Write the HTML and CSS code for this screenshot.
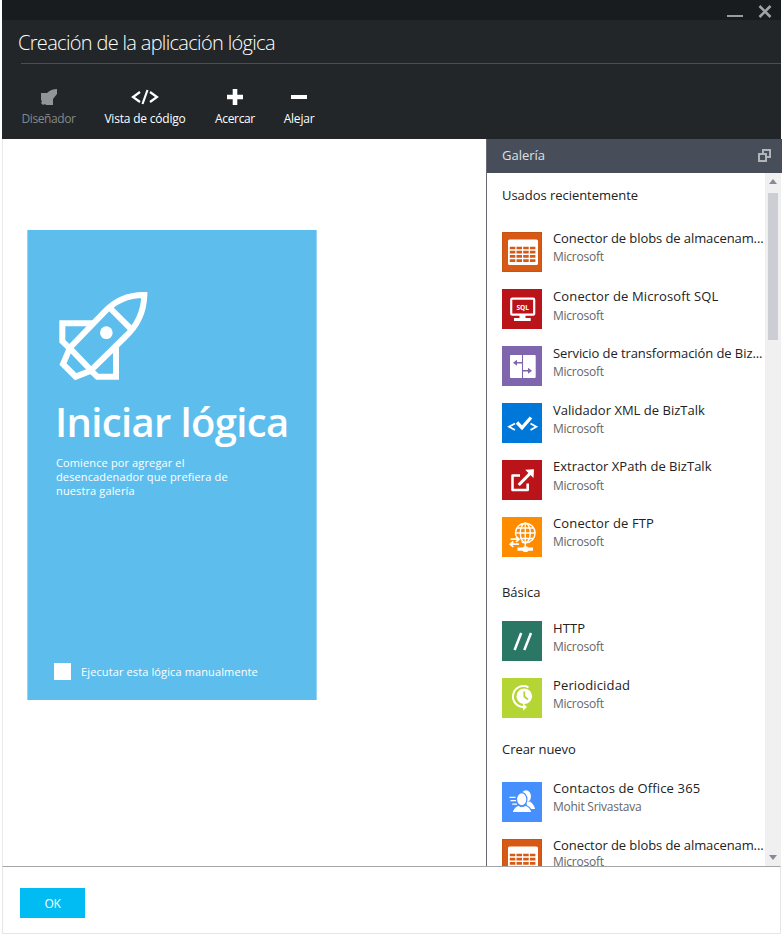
FILE: index.html
```html
<!DOCTYPE html>
<html lang="es">
<head>
<meta charset="utf-8">
<title>Creación de la aplicación lógica</title>
<link rel="stylesheet" href="styles.css">
</head>
<body>
<svg class="defs" aria-hidden="true">
  <symbol id="blob" viewBox="0 0 40 40">
    <rect width="40" height="40" fill="#d65a15"/>
    <rect x=".5" y=".5" width="39" height="39" fill="none" stroke="#c95411"/>
    <rect x="6" y="7.5" width="30" height="25.5" rx="1.5" fill="#fff"/>
    <g stroke="#d65a15" stroke-width="2.7" stroke-dasharray="5.5 1.2">
      <path d="M7.8 16H34.2M7.8 20.2H34.2M7.8 24.4H34.2M7.8 28.6H34.2"/>
    </g>
  </symbol>
</svg>
<div class="window">
  <div class="titlebar">
    <svg width="16" height="14" viewBox="0 0 16 14"><path d="M0 12H16" stroke="#999c9e" stroke-width="2"/></svg>
    <svg width="14" height="14" viewBox="0 0 14 14"><path d="M1.5 2L12.5 13M12.5 2L1.5 13" stroke="#a0a3a5" stroke-width="2.6"/></svg>
  </div>
  <header class="header">
    <h1>Creación de la aplicación lógica</h1>
    <nav class="toolbar">
      <div class="tool tool-off"><svg width="18" height="18" viewBox="0 0 18 18"><path fill="#929496" d="M17 1V6L13 11V17H6L5 16L3 17L1 15L2 13L1 12V5H7Q11 1 17 1Z"/></svg><span>Diseñador</span></div>
      <div class="tool tool-code"><svg width="28" height="18" viewBox="0 0 28 18"><path fill="none" stroke="#fff" stroke-width="2.2" d="M9 4L2 9L9 14M19 4L26 9L19 14M16.5 2L11.5 16"/></svg><span>Vista de código</span></div>
      <div class="tool tool-in"><svg width="18" height="18" viewBox="0 0 18 18"><path stroke="#fff" stroke-width="4.6" d="M9 1V17M1 9H17"/></svg><span>Acercar</span></div>
      <div class="tool tool-out"><svg width="18" height="18" viewBox="0 0 18 18"><path stroke="#fff" stroke-width="4" d="M1 9H17"/></svg><span>Alejar</span></div>
    </nav>
  </header>
  <main class="main">
    <section class="canvas">
      <div class="start">
        <svg class="rocket" viewBox="110 210 276 276" fill="none" stroke="#fff" stroke-width="18">
          <path d="M372 225Q300 224 250 278L148 384L212 451L314 351Q370 300 372 225Z"/>
          <path d="M272 267L330 325M220 310H126V364L148 385L128 432L166 470L212 452L231 470H287V376"/>
          <circle cx="258" cy="338" r="19" fill="#fff" stroke="none"/>
        </svg>
        <h2>Iniciar lógica</h2>
        <p>Comience por agregar el<br>desencadenador que prefiera de<br>nuestra galería</p>
        <div class="manual"><i class="box"></i><span>Ejecutar esta lógica manualmente</span></div>
      </div>
    </section>
    <aside class="gallery">
      <div class="gallery-head"><span>Galería</span>
        <svg width="14" height="14" viewBox="0 0 14 14" fill="none" stroke="#b1b5b9" stroke-width="2"><path d="M5 5V2H12V9H9"/><path d="M1 6H8V13H1Z"/></svg>
      </div>
      <div class="gallery-body">
        <div class="list">
          <h3>Usados recientemente</h3>
          <div class="item up"><svg><use href="#blob"/></svg><div><b class="clip">Conector de blobs de almacenam...</b><small>Microsoft</small></div></div>
          <div class="item low"><svg viewBox="0 0 40 40"><rect width="40" height="40" fill="#ba141a"/><rect x="9.2" y="9.7" width="23" height="16" rx="1" fill="none" stroke="#fff" stroke-width="2.2"/><path fill="#fff" d="M17.5 26H23.5V29H28.7V32H12V29H17.5Z"/><text class="sql" x="20.7" y="20.6" text-anchor="middle">SQL</text></svg><div><b>Conector de Microsoft SQL</b><small>Microsoft</small></div></div>
          <div class="item"><svg viewBox="0 0 40 40"><rect width="40" height="40" fill="#7e65ae"/><rect x="8" y="9" width="25.7" height="23" rx="1" fill="#fff"/><path fill="none" stroke="#7e65ae" stroke-width="1.1" d="M20.5 9V32"/><path fill="none" stroke="#7e65ae" stroke-width="1.5" d="M20.7 16.7H12.5M21 24.7H28.5"/><path fill="#7e65ae" d="M11 16.7L15 13.7V19.7ZM30 24.7L26 21.7V27.7Z"/></svg><div><b class="clip">Servicio de transformación de Biz...</b><small>Microsoft</small></div></div>
          <div class="item"><svg viewBox="0 0 40 40"><rect width="40" height="40" fill="#0078d9"/><path fill="none" stroke="#fff" stroke-width="1.8" d="M13 20.5L7 23.7L13 27M28.5 20.5L34.3 23.7L28.5 27"/><path fill="none" stroke="#fff" stroke-width="3.4" d="M15 19.5L20 24.8L29 14.5"/></svg><div><b class="biz">Validador XML de BizTalk</b><small>Microsoft</small></div></div>
          <div class="item hi"><svg viewBox="0 0 40 40"><rect width="40" height="40" fill="#ba141a"/><path fill="none" stroke="#fff" stroke-width="2.6" stroke-linejoin="round" d="M18 15.5H10.5V30H25.7V23.5"/><path stroke="#fff" stroke-width="3.2" d="M16.7 25L28.5 13"/><path fill="#fff" d="M32 9.3L23.2 9.8L31.5 18Z"/></svg><div><b class="biz">Extractor XPath de BizTalk</b><small>Microsoft</small></div></div>
          <div class="item up"><svg viewBox="0 0 40 40"><rect width="40" height="40" fill="#ff8c00"/><g fill="none" stroke="#fff" stroke-width="1.4"><circle cx="23.3" cy="16" r="9.8"/><ellipse cx="23.3" cy="16" rx="5" ry="9.8"/><path d="M23.3 6V30M13.5 16H33M15 11H31.5M15 21.5H31.5"/></g><path fill="#ff8c00" d="M6 19H17L20 26L16 30H6Z"/><path fill="none" stroke="#fff" stroke-width="1.7" d="M8.5 22.2H16.5M14 19.5L17 22.2L14 25M17 27.2H9M11.3 24.5L8.3 27.2L11.3 30"/><path fill="#fff" d="M15.5 30.5H20.5L22 29.5H25L26.5 30.5H31V33.8H26.5L25 35H22L20.5 33.8H15.5Z"/></svg><div><b>Conector de FTP</b><small>Microsoft</small></div></div>
          <h3>Básica</h3>
          <div class="item"><svg viewBox="0 0 40 40"><rect width="40" height="40" fill="#2b7766"/><path stroke="#fff" stroke-width="2.5" d="M12.6 29L19.2 12M22.3 29L29 12"/></svg><div><b>HTTP</b><small>Microsoft</small></div></div>
          <div class="item"><svg viewBox="0 0 40 40"><rect width="40" height="40" fill="#b4d534"/><circle cx="22.3" cy="18.3" r="7.8" fill="#fff"/><path fill="none" stroke="#fff" stroke-width="2" d="M26.5 9.3A10.5 10.5 0 1 0 22 29"/><path fill="#fff" d="M21 25.3L25 29L21 32.7Z"/><path fill="none" stroke="#b4d534" stroke-width="1.8" d="M22.3 13.5V18.5L26 21.5"/></svg><div><b>Periodicidad</b><small>Microsoft</small></div></div>
          <h3 class="last">Crear nuevo</h3>
          <div class="item up"><svg viewBox="0 0 40 40"><rect width="40" height="40" fill="#468fff"/><g fill="#fff"><ellipse cx="24" cy="14.2" rx="5" ry="6"/><path d="M24 20L28 19.5Q32 22 33 27H26Z"/><g stroke="#468fff" stroke-width="1.2"><ellipse cx="19.7" cy="17.3" rx="5.2" ry="6.6"/><path d="M10 30.7Q11.5 25 16.5 23.3Q19.7 25.7 23.5 23.3Q28.5 25 30 30.7Z"/></g></g><path stroke="#fff" stroke-width="1.3" d="M7.5 15.3H13.5M8.5 18.7H14M10.2 22.1H15"/></svg><div><b>Contactos de Office 365</b><small>Mohit Srivastava</small></div></div>
          <div class="item cut"><svg><use href="#blob"/></svg><div><b class="clip">Conector de blobs de almacenam...</b><small>Microsoft</small></div></div>
        </div>
        <div class="scroll">
          <svg width="8" height="5" viewBox="0 0 8 5"><path fill="#868999" d="M0 5L4 0L8 5Z"/></svg>
          <i class="thumb"></i>
          <svg width="8" height="5" viewBox="0 0 8 5"><path fill="#868999" d="M0 0H8L4 5Z"/></svg>
        </div>
      </div>
    </aside>
  </main>
  <footer class="footer"><button>OK</button></footer>
</div>
</body>
</html>
```
FILE: styles.css
```css
* { box-sizing: border-box; }
body { margin: 0; background: #fff; font-family: "Open Sans", "Noto Sans", sans-serif; font-size: 12px; overflow: hidden; }
h1, h2, h3, p { margin: 0; font-weight: 400; white-space: nowrap; }
svg { display: block; flex: none; }
.defs { position: absolute; width: 0; height: 0; }
.window { width: 780px; height: 934px; margin-left: 2px; display: flex; flex-direction: column; }
.titlebar { height: 20px; width: 779px; background: #181c1e; display: flex; justify-content: flex-end; gap: 15px; padding: 4px 9px 0 0; }
.header { height: 119px; width: 779px; background: #222629; color: #fff; }
.header h1 { height: 43px; line-height: 45px; margin-left: 16px; font-size: 20px; font-weight: 300; letter-spacing: -.68px; }
.toolbar { margin-left: 19px; border-top: 1px solid #4b4f51; height: 75px; display: flex; gap: 30px; padding-top: 24px; }
.tool { display: flex; flex-direction: column; align-items: center; white-space: nowrap; line-height: 16px; gap: 5px; letter-spacing: -.2px; }
.tool-off { width: 55px; margin-right: -2px; color: #85888a; letter-spacing: -.4px; }
.tool-code { width: 82px; }
.tool-in { width: 40px; margin-left: -1px; letter-spacing: -.35px; }
.tool-out { width: 30px; margin-left: -1px; }
.main { height: 727px; display: flex; }
.canvas { width: 484px; border-left: 1px solid #e9e9e9; padding: 91px 0 0 24px; }
.start { width: 290px; height: 470px; background: #5dbeed; color: #fff; border: solid #93d4f3; border-width: 0 1px; padding: 60px 0 0 28px; display: flex; flex-direction: column; }
.rocket { width: 92px; height: 92px; margin-left: 1px; }
.start h2 { font-size: 40px; font-weight: 600; line-height: 50px; margin: 15px 0 0 -1px; letter-spacing: -.65px; }
.start p { font-size: 11px; line-height: 14px; margin-top: 9px; letter-spacing: .13px; }
.manual { display: flex; align-items: center; gap: 10px; margin: 164px 0 0 -2px; font-size: 11px; height: 18px; letter-spacing: .12px; }
.box { width: 17px; height: 17px; background: #fff; }
.gallery { width: 296px; border-left: 1px solid #66696d; }
.gallery-head { height: 34px; background: #474e59; color: #dde1e4; font-size: 13px; display: flex; justify-content: space-between; align-items: center; padding: 0 10px 2px 15px; }
.gallery-body { height: 693px; display: flex; }
.list { width: 278px; padding-left: 15px; height: 693px; overflow: hidden; }
.list h3 { font-size: 13px; line-height: 20px; margin: 12px 0 27px; color: #222; letter-spacing: -.04px; }
.item + h3 { margin: 8px 0 19px; }
.item + .last { margin: 4px 0 23px; }
.item { height: 57px; display: flex; gap: 11px; color: #222; white-space: nowrap; }
.item > svg { width: 40px; height: 40px; }
.item b { display: block; font-weight: 400; font-size: 13px; line-height: 20px; margin-top: -3px; letter-spacing: .14px; }
.item b.clip { letter-spacing: -.08px; }
.item b.biz { letter-spacing: .02px; }
.item small { display: block; font-size: 12px; line-height: 18px; color: #666; letter-spacing: -.25px; }
.up b, .hi b { margin-top: -4px; }
.low small, .hi small { margin-top: 1px; }
.cut b { margin-top: -4px; }
.cut small { margin-top: -2px; }
.sql { font: 700 6.6px "Open Sans", sans-serif; fill: #fff; }
.scroll { width: 16px; background: #f0f0f0; display: flex; flex-direction: column; align-items: center; padding: 6px 0; }
.thumb { width: 10px; height: 147px; margin: 9px 0 auto; background: #cdced4; }
.footer { width: 779px; height: 68px; border: 1px solid #e6e6e6; border-top-color: #a5a5a5; padding: 21px 0 0 17px; }
.footer button { display: block; width: 65px; height: 30px; border: 0; background: #00bcf2; color: #fff; font: 12px "Open Sans", sans-serif; letter-spacing: -.3px; padding: 0; }
```
